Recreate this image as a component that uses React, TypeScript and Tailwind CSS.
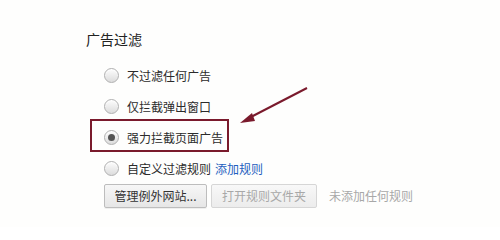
import React from 'react'

const options = [
  { label: '不过滤任何广告', checked: false },
  { label: '仅拦截弹出窗口', checked: false },
  { label: '强力拦截页面广告', checked: true },
  { label: '自定义过滤规则', checked: false, link: '添加规则' },
]

function Radio({ checked }: { checked: boolean }) {
  return (
    <span className="flex h-[15px] w-[15px] shrink-0 items-center justify-center rounded-full border border-[#b0b0b0] bg-gradient-to-b from-[#fdfdfd] to-[#dcdcdc] shadow-[inset_0_1px_1px_rgba(255,255,255,0.9)]">
      {checked && <span className="h-[7px] w-[7px] rounded-full bg-[#555]" />}
    </span>
  )
}

export default function App() {
  return (
    <div
      className="relative h-[227px] w-[500px] overflow-hidden bg-[#fefefd] text-[#2b2b2b]"
      style={{ fontFamily: '"Microsoft YaHei", "Noto Sans CJK SC", sans-serif' }}
    >
      <div className="flex flex-col pl-[86px] pt-[30px]">
        {/* Section title */}
        <h2 className="h-[18px] text-[14px] leading-[18px] text-[#222]">广告过滤</h2>

        <div className="mt-[12px] flex flex-col pl-[18px]">
          {options.map((o) => (
            <label key={o.label} className="flex h-[31px] items-center gap-[8px] text-[12px]">
              <Radio checked={o.checked} />
              <span className="flex items-center gap-[4px] leading-none">
                {o.label}
                {o.link && <span className="text-[#1f5fbf]">{o.link}</span>}
              </span>
            </label>
          ))}

          <div className="flex items-center gap-[4px] text-[12px]">
            <button className="h-[24px] w-[103px] rounded-[2px] border border-[#bdbdbd] bg-gradient-to-b from-[#f7f7f7] to-[#e6e6e6] leading-none text-[#333] shadow-[0_1px_0_rgba(0,0,0,0.06)]">
              管理例外网站...
            </button>
            <button
              disabled
              className="h-[24px] w-[106px] rounded-[2px] border border-[#d6d6d6] bg-gradient-to-b from-[#f8f8f8] to-[#ececec] leading-none text-[#a8a8a8]"
            >
              打开规则文件夹
            </button>
            <span className="ml-[8px] leading-none text-[#a8a8a8]">未添加任何规则</span>
          </div>
        </div>
      </div>

      {/* Annotation: highlight box and arrow */}
      <div className="pointer-events-none absolute left-[90px] top-[119px] h-[33px] w-[139px] border-2 border-[#7a1a2c]" />
      <svg className="pointer-events-none absolute left-0 top-0" width="500" height="227">
        <line x1="307" y1="88" x2="248" y2="118.5" stroke="#7a1a2c" strokeWidth="2" />
        <polygon points="240,123 252,113 255,121" fill="#7a1a2c" />
      </svg>
    </div>
  )
}
